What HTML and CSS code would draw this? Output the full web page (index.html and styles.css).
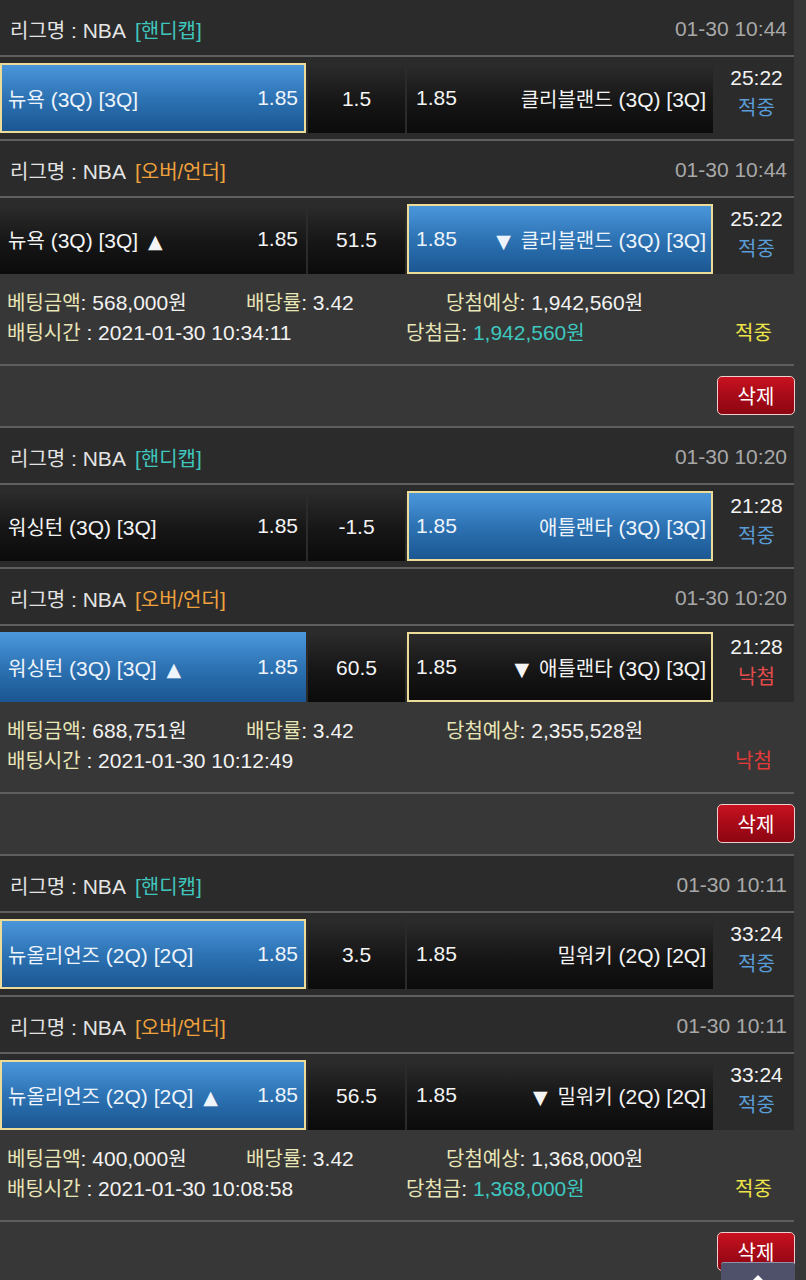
FILE: index.html
```html
<!DOCTYPE html>
<html lang="ko">
<head>
<meta charset="utf-8">
<title>배팅내역</title>
<link rel="stylesheet" href="styles.css">
</head>
<body>
<div class="list">

  <section class="slip">
    <div class="league"><span class="lname"><span class="k">리그명</span> : NBA</span><span class="type hc">[<span class="k">핸디캡</span>]</span><span class="date">01-30 10:44</span></div>
    <div class="match">
      <div class="cell side home blue pick"><span class="team"><span class="k">뉴욕</span> (3Q) [3Q]</span><span class="odd">1.85</span></div>
      <div class="cell mid">1.5</div>
      <div class="cell side away"><span class="odd">1.85</span><span class="team"><span class="k">클리블랜드</span> (3Q) [3Q]</span></div>
      <div class="status"><span class="time">25:22</span><span class="res hit k">적중</span></div>
    </div>
    <div class="league"><span class="lname"><span class="k">리그명</span> : NBA</span><span class="type ou">[<span class="k">오버/언더</span>]</span><span class="date">01-30 10:44</span></div>
    <div class="match last">
      <div class="cell side home"><span class="team"><span class="k">뉴욕</span> (3Q) [3Q] <span class="tri up">▲</span></span><span class="odd">1.85</span></div>
      <div class="cell mid">51.5</div>
      <div class="cell side away blue pick"><span class="odd">1.85</span><span class="team"><span class="tri dn">▼</span> <span class="k">클리블랜드</span> (3Q) [3Q]</span></div>
      <div class="status"><span class="time">25:22</span><span class="res hit k">적중</span></div>
    </div>
    <div class="summary">
      <div class="sline">
        <span class="c1"><span class="lbl k">베팅금액</span>: 568,000<span class="k">원</span></span>
        <span class="c2"><span class="lbl k">배당률</span>: 3.42</span>
        <span class="c3"><span class="lbl k">당첨예상</span>: 1,942,560<span class="k">원</span></span>
      </div>
      <div class="sline">
        <span class="d1"><span class="lbl k">배팅시간</span> : 2021-01-30 10:34:11</span>
        <span class="d2"><span class="lbl k">당첨금</span>: <span class="win">1,942,560<span class="k">원</span></span></span>
        <span class="d3 ok k">적중</span>
      </div>
    </div>
    <div class="actions"><button class="del" type="button">삭제</button></div>
  </section>

  <section class="slip">
    <div class="league"><span class="lname"><span class="k">리그명</span> : NBA</span><span class="type hc">[<span class="k">핸디캡</span>]</span><span class="date">01-30 10:20</span></div>
    <div class="match">
      <div class="cell side home"><span class="team"><span class="k">워싱턴</span> (3Q) [3Q]</span><span class="odd">1.85</span></div>
      <div class="cell mid">-1.5</div>
      <div class="cell side away blue pick"><span class="odd">1.85</span><span class="team"><span class="k">애틀랜타</span> (3Q) [3Q]</span></div>
      <div class="status"><span class="time">21:28</span><span class="res hit k">적중</span></div>
    </div>
    <div class="league"><span class="lname"><span class="k">리그명</span> : NBA</span><span class="type ou">[<span class="k">오버/언더</span>]</span><span class="date">01-30 10:20</span></div>
    <div class="match last">
      <div class="cell side home blue"><span class="team"><span class="k">워싱턴</span> (3Q) [3Q] <span class="tri up">▲</span></span><span class="odd">1.85</span></div>
      <div class="cell mid">60.5</div>
      <div class="cell side away pick"><span class="odd">1.85</span><span class="team"><span class="tri dn">▼</span> <span class="k">애틀랜타</span> (3Q) [3Q]</span></div>
      <div class="status"><span class="time">21:28</span><span class="res miss k">낙첨</span></div>
    </div>
    <div class="summary">
      <div class="sline">
        <span class="c1"><span class="lbl k">베팅금액</span>: 688,751<span class="k">원</span></span>
        <span class="c2"><span class="lbl k">배당률</span>: 3.42</span>
        <span class="c3"><span class="lbl k">당첨예상</span>: 2,355,528<span class="k">원</span></span>
      </div>
      <div class="sline">
        <span class="d1"><span class="lbl k">배팅시간</span> : 2021-01-30 10:12:49</span>
        <span class="d2"></span>
        <span class="d3 lost k">낙첨</span>
      </div>
    </div>
    <div class="actions"><button class="del" type="button">삭제</button></div>
  </section>

  <section class="slip">
    <div class="league"><span class="lname"><span class="k">리그명</span> : NBA</span><span class="type hc">[<span class="k">핸디캡</span>]</span><span class="date">01-30 10:11</span></div>
    <div class="match">
      <div class="cell side home blue pick"><span class="team"><span class="k">뉴올리언즈</span> (2Q) [2Q]</span><span class="odd">1.85</span></div>
      <div class="cell mid">3.5</div>
      <div class="cell side away"><span class="odd">1.85</span><span class="team"><span class="k">밀워키</span> (2Q) [2Q]</span></div>
      <div class="status"><span class="time">33:24</span><span class="res hit k">적중</span></div>
    </div>
    <div class="league"><span class="lname"><span class="k">리그명</span> : NBA</span><span class="type ou">[<span class="k">오버/언더</span>]</span><span class="date">01-30 10:11</span></div>
    <div class="match last">
      <div class="cell side home blue pick"><span class="team"><span class="k">뉴올리언즈</span> (2Q) [2Q] <span class="tri up">▲</span></span><span class="odd">1.85</span></div>
      <div class="cell mid">56.5</div>
      <div class="cell side away"><span class="odd">1.85</span><span class="team"><span class="tri dn">▼</span> <span class="k">밀워키</span> (2Q) [2Q]</span></div>
      <div class="status"><span class="time">33:24</span><span class="res hit k">적중</span></div>
    </div>
    <div class="summary">
      <div class="sline">
        <span class="c1"><span class="lbl k">베팅금액</span>: 400,000<span class="k">원</span></span>
        <span class="c2"><span class="lbl k">배당률</span>: 3.42</span>
        <span class="c3"><span class="lbl k">당첨예상</span>: 1,368,000<span class="k">원</span></span>
      </div>
      <div class="sline">
        <span class="d1"><span class="lbl k">배팅시간</span> : 2021-01-30 10:08:58</span>
        <span class="d2"><span class="lbl k">당첨금</span>: <span class="win">1,368,000<span class="k">원</span></span></span>
        <span class="d3 ok k">적중</span>
      </div>
    </div>
    <div class="actions"><button class="del" type="button">삭제</button></div>
  </section>

</div>
<a class="totop" href="#" aria-label="맨 위로"><span class="arrow"></span></a>
</body>
</html>
```

FILE: styles.css
```css
* {
  box-sizing: border-box;
  margin: 0;
  padding: 0;
}

html {
  overflow: hidden;
}

body {
  background: #373737;
  color: #f2f2f2;
  font-family: "Liberation Sans", "Noto Sans CJK KR", sans-serif;
  font-size: 21px;
  width: 806px;
}

.k {
  font-size: 20px;
}

.tri {
  font-family: "DejaVu Sans", sans-serif;
  font-size: 19px;
}

.tri.up {
  margin-left: 4px;
}

.tri.dn {
  margin-right: 4px;
}

.list {
  width: 794px;
}

.league {
  height: 57px;
  background: #2b2b2b;
  border-bottom: 2px solid #5f5f5f;
  display: flex;
  align-items: center;
  padding: 3px 7px 0 10px;
}

.lname {
  color: #e4e4e4;
}

.type {
  margin-left: 9px;
}

.hc {
  color: #3fc6bd;
}

.ou {
  color: #f0a23c;
}

.date {
  margin-left: auto;
  color: #a8a8a8;
}

.match {
  height: 84px;
  padding-top: 6px;
  background: #2b2b2b;
  border-bottom: 2px solid #5f5f5f;
  display: flex;
  align-items: flex-start;
}

.match.last {
  height: 76px;
  border-bottom: 0;
}

.cell {
  height: 70px;
  display: flex;
  align-items: center;
  color: #f4f4f4;
  background: linear-gradient(#2c2c2c 0%, #161616 55%, #0b0b0b 100%);
}

.side {
  width: 306px;
  justify-content: space-between;
}

.home {
  padding: 0 8px 0 8px;
}

.away {
  padding: 0 7px 0 9px;
}

.mid {
  width: 97px;
  margin: 0 2px;
  justify-content: center;
  padding-top: 2px;
}

.blue {
  color: #eef4fb;
  background: linear-gradient(#4c98dd 0%, #2d73b4 50%, #1a5590 100%);
}

.pick {
  outline: 2px solid #ecdc98;
  outline-offset: -2px;
}

.status {
  flex: 1;
  height: 70px;
  display: flex;
  flex-direction: column;
  align-items: center;
  padding-left: 6px;
}

.time {
  line-height: 30px;
  color: #f4f4f4;
}

.res {
  line-height: 30px;
}

.hit {
  color: #5a9dd6;
}

.miss {
  color: #e64b4b;
}

.summary {
  height: 92px;
  padding: 14px 0 0 7px;
  border-bottom: 2px solid #5f5f5f;
}

.sline {
  display: flex;
  height: 30px;
  line-height: 30px;
  white-space: nowrap;
}

.lbl {
  color: #e8e5b6;
}

.c1 {
  width: 239px;
}

.c2 {
  width: 200px;
}

.d1 {
  width: 399px;
}

.d2 {
  width: 329px;
}

.win {
  color: #3ec7bf;
}

.ok {
  color: #ece448;
}

.lost {
  color: #e43a3a;
}

.actions {
  height: 62px;
  padding-top: 10px;
  border-bottom: 2px solid #5f5f5f;
  display: flex;
  justify-content: flex-end;
}

.del {
  width: 78px;
  height: 39px;
  margin-right: -1px;
  background: linear-gradient(#c81220 0%, #a80a18 50%, #8c0612 100%);
  border: 1px solid #f0cccc;
  border-radius: 5px;
  color: #ffffff;
  font-family: "Liberation Sans", "Noto Sans CJK KR", sans-serif;
  font-size: 20px;
}

.totop {
  position: fixed;
  right: 11px;
  bottom: -22px;
  width: 74px;
  height: 40px;
  background: #4e5169;
  border-top: 1px solid #8e91ab;
  border-radius: 3px;
  display: flex;
  justify-content: center;
}

.arrow {
  margin-top: 12px;
  width: 0;
  height: 0;
  border-left: 7px solid transparent;
  border-right: 7px solid transparent;
  border-bottom: 7px solid #ffffff;
}
```
